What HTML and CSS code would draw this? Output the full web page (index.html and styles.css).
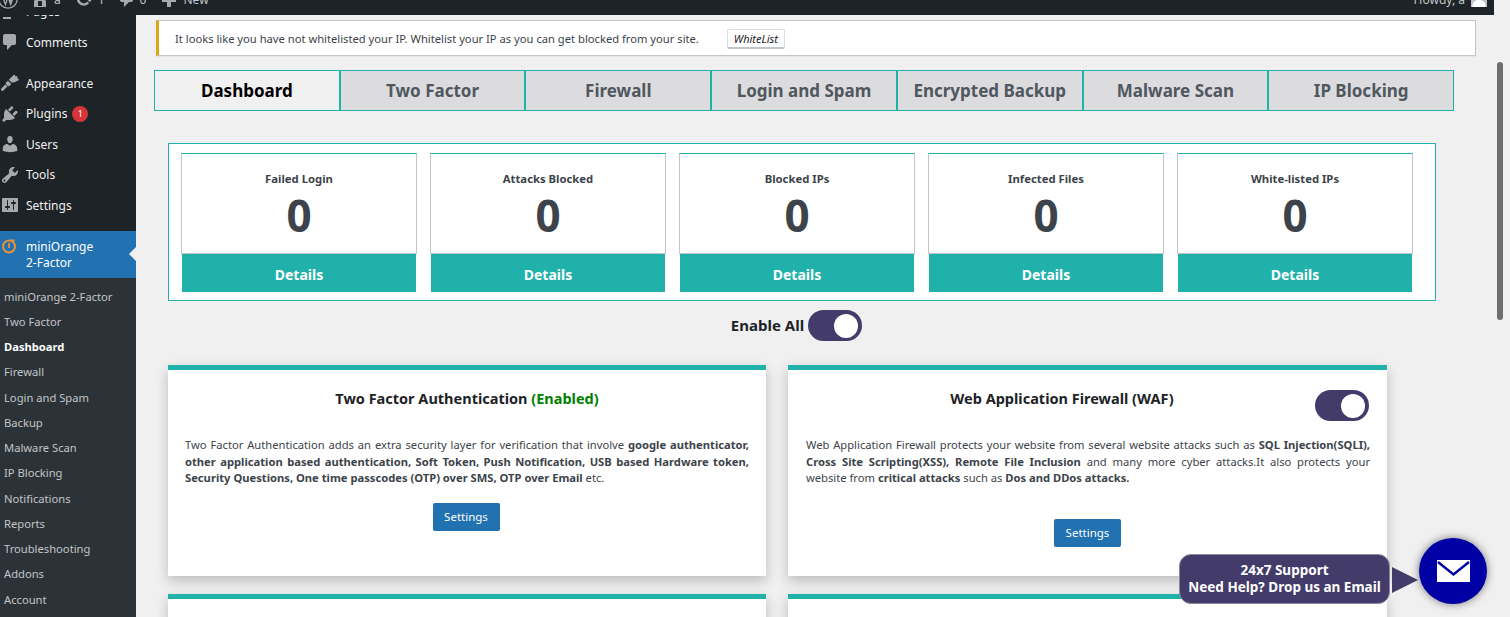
FILE: index.html
```html
<!doctype html>
<html lang="en">
<head>
  <meta charset="UTF-8" />
  <title>miniOrange 2-Factor - Dashboard</title>
  <link rel="stylesheet" href="styles.css">
</head>
<body>
  <div class="page">
    <div class="page-left">
      <div class="adminbar">
        <div class="adminbar-left">
          <span class="bar-item bar-logo"><svg viewBox="0 0 20 20" class="bar-icon"><circle cx="10" cy="10" r="9.2" fill="none" stroke="currentColor" stroke-width="1.3"/><path d="M3.5 6.5l4 11 2.5-7.5 2.7 7.5 3.3-9.5c.4-1.3.3-2.4-.2-3.4H8.5l1.2 2.5-2.3 6.5L5.6 6.5z" fill="currentColor"/></svg></span>
          <span class="bar-item bar-home"><svg viewBox="0 0 20 20" class="bar-icon"><path d="M16 8.5l1.53 1.53-1.06 1.06L10 4.62l-6.47 6.47-1.06-1.06L10 2.5l4 4v-2h2v4zm-6-2.46l6 5.99V18H4v-5.97zM12 17v-5H8v5h4z" fill="currentColor"/></svg>a</span>
          <span class="bar-item bar-updates"><svg viewBox="0 0 20 20" class="bar-icon"><path d="M10.2 3.28c3.53 0 6.43 2.61 6.92 6h2.08l-3.5 4-3.5-4h2.32c-.45-1.97-2.21-3.45-4.32-3.45-1.45 0-2.73.71-3.54 1.78L4.95 5.66C6.23 4.2 8.11 3.28 10.2 3.28zm-.4 13.44c-3.52 0-6.43-2.61-6.92-6H.8l3.5-4c1.17 1.33 2.33 2.67 3.5 4H5.48c.45 1.97 2.21 3.45 4.32 3.45 1.45 0 2.73-.71 3.54-1.78l1.71 1.95c-1.28 1.46-3.15 2.38-5.25 2.38z" fill="currentColor"/></svg>1</span>
          <span class="bar-item bar-comments"><svg viewBox="0 0 20 20" class="bar-icon"><path d="M5 2h9q.82 0 1.41.59T16 4v7q0 .82-.59 1.41T14 13h-2l-5 5v-5H5q-.82 0-1.41-.59T3 11V4q0-.82.59-1.41T5 2z" fill="currentColor"/></svg>0</span>
          <span class="bar-item bar-new"><svg viewBox="0 0 20 20" class="bar-icon"><path d="M17 10v3h-5v5H8v-5H3v-3h5V5h4v5h5z" fill="currentColor"/></svg>New</span>
        </div>
        <div class="adminbar-right">
          <span class="bar-item bar-howdy">Howdy, a</span>
          <span class="avatar"><svg viewBox="0 0 16 16"><path d="M8 1c2.2 0 3.2 2 3.2 4.200 0 1.600-.7 3-1.500 3.800 2.500.8 4.800 2.500 4.800 5.500V16h-13v-1.500c0-3 2.300-4.700 4.800-5.500-.8-.8-1.500-2.200-1.500-3.800C4.800 3 5.800 1 8 1z" fill="#fff"/></svg></span>
        </div>
      </div>

      <div class="wp-body">
        <nav class="sidebar">
          <ul class="menu menu-top">
            <li class="menu-clipped"><svg viewBox="0 0 20 20" class="menu-icon"><path d="M3 3h11v2H3zm0 4h14v2H3zm0 4h14v2H3zm0 4h8v2H3z" fill="currentColor"/></svg>Pages</li>
            <li class="menu-gap"><svg viewBox="0 0 20 20" class="menu-icon"><path d="M5 2h9q.82 0 1.41.59T16 4v7q0 .82-.59 1.41T14 13h-2l-5 5v-5H5q-.82 0-1.41-.59T3 11V4q0-.82.59-1.41T5 2z" fill="currentColor"/></svg>Comments</li>
            <li><svg viewBox="0 0 20 20" class="menu-icon"><path d="M11.500 9.500l-2.700-2.700 5-5 1.300.5.200 1.300 1.200-.5 1.200 1.200-.5 1.200 1.300.2.500 1.300-5 2.500zM7.900 7.700l3.400 3.400-1.800 1.800c-.5.500-1.300.5-1.800 0L6.100 11.300c-.5-.5-.5-1.300 0-1.800zM5.400 11.600l2 2-4 4c-.6.600-1.400.6-2 0s-.6-1.400 0-2z" fill="currentColor"/></svg>Appearance</li>
            <li><svg viewBox="0 0 20 20" class="menu-icon"><path d="M13.110 4.360L9.870 7.600 8 5.730l3.240-3.240c.35-.34 1.050-.2 1.560.32.52.51.66 1.210.31 1.550zm-8 1.770l.91-1.120 9.010 9.010-1.190.84c-.71.71-2.630 1.160-3.820 1.160H6.140L4.900 17.260c-.59.59-1.540.59-2.120 0-.59-.58-.59-1.530 0-2.120l1.240-1.240v-3.880c0-1.130.4-3.190 1.090-3.890zm7.260 3.970l3.240-3.240c.34-.35 1.040-.21 1.550.31.52.51.66 1.210.31 1.550l-3.240 3.250z" fill="currentColor"/></svg>Plugins<span class="badge">1</span></li>
            <li><svg viewBox="0 0 20 20" class="menu-icon"><path d="M10 9.250c-2.270 0-2.730-3.440-2.730-3.440C7 4.020 7.820 2 9.970 2c2.160 0 2.980 2.020 2.710 3.810 0 0-.41 3.440-2.680 3.440zm0 2.570L12.720 10c2.390 0 4.520 2.330 4.520 4.530v2.490s-3.650 1.130-7.240 1.130c-3.650 0-7.240-1.130-7.240-1.130v-2.490c0-2.250 1.940-4.480 4.470-4.480z" fill="currentColor"/></svg>Users</li>
            <li><svg viewBox="0 0 20 20" class="menu-icon"><path d="M16.680 9.770c-1.340 1.340-3.300 1.670-4.950.99l-5.410 6.520c-.99.99-2.590.99-3.580 0s-.99-2.590 0-3.570l6.520-5.420c-.68-1.650-.35-3.610.99-4.950 1.280-1.280 3.120-1.620 4.720-1.060l-2.890 2.890 2.820 2.820 2.860-2.870c.53 1.580.18 3.390-1.080 4.650zM3.810 16.210c.4.39 1.040.39 1.430 0 .4-.4.4-1.040 0-1.430-.39-.4-1.030-.4-1.430 0-.39.39-.39 1.030 0 1.430z" fill="currentColor"/></svg>Tools</li>
            <li><svg viewBox="0 0 20 20" class="menu-icon"><path d="M18 16V4c0-.55-.45-1-1-1H3c-.55 0-1 .45-1 1v12c0 .55.45 1 1 1h14c.55 0 1-.45 1-1zM8 11h1c.55 0 1 .45 1 1s-.45 1-1 1H8v1.500c0 .28-.22.5-.5.5s-.5-.22-.5-.5V13H6c-.55 0-1-.45-1-1s.45-1 1-1h1V5.500c0-.28.22-.5.5-.5s.5.22.5.5V11zm5-2h-1c-.55 0-1-.45-1-1s.45-1 1-1h1V5.500c0-.28.22-.5.5-.5s.5.22.5.5V7h1c.55 0 1 .45 1 1s-.45 1-1 1h-1v5.500c0 .28-.22.5-.5.5s-.5-.22-.5-.5V9z" fill="currentColor"/></svg>Settings</li>
          </ul>

          <div class="menu-current">
            <svg viewBox="0 0 20 20" class="menu-icon mo-icon"><circle cx="9" cy="10.500" r="6" fill="none" stroke="#e8913a" stroke-width="2"/><path d="M8.200 7h1.800v5H8.200zM10.500 3.500h4v2h-4z" fill="#e8913a"/></svg>
            <span>miniOrange<br>2-Factor</span>
          </div>

          <ul class="submenu">
            <li>miniOrange 2-Factor</li>
            <li>Two Factor</li>
            <li class="submenu-active">Dashboard</li>
            <li>Firewall</li>
            <li>Login and Spam</li>
            <li>Backup</li>
            <li>Malware Scan</li>
            <li>IP Blocking</li>
            <li>Notifications</li>
            <li>Reports</li>
            <li>Troubleshooting</li>
            <li>Addons</li>
            <li>Account</li>
          </ul>
        </nav>

        <main class="content">
          <div class="notice">
            <span class="notice-text">It looks like you have not whitelisted your IP. Whitelist your IP as you can get blocked from your site.</span>
            <button class="whitelist-btn">WhiteList</button>
          </div>

          <div class="tabs">
            <a class="tab tab-active">Dashboard</a>
            <a class="tab">Two Factor</a>
            <a class="tab">Firewall</a>
            <a class="tab">Login and Spam</a>
            <a class="tab">Encrypted Backup</a>
            <a class="tab">Malware Scan</a>
            <a class="tab">IP Blocking</a>
          </div>

          <div class="stats">
            <div class="stat">
              <div class="stat-top"><div class="stat-label">Failed Login</div><div class="stat-value">0</div></div>
              <div class="stat-link">Details</div>
            </div>
            <div class="stat">
              <div class="stat-top"><div class="stat-label">Attacks Blocked</div><div class="stat-value">0</div></div>
              <div class="stat-link">Details</div>
            </div>
            <div class="stat">
              <div class="stat-top"><div class="stat-label">Blocked IPs</div><div class="stat-value">0</div></div>
              <div class="stat-link">Details</div>
            </div>
            <div class="stat">
              <div class="stat-top"><div class="stat-label">Infected Files</div><div class="stat-value">0</div></div>
              <div class="stat-link">Details</div>
            </div>
            <div class="stat">
              <div class="stat-top"><div class="stat-label">White-listed IPs</div><div class="stat-value">0</div></div>
              <div class="stat-link">Details</div>
            </div>
          </div>

          <div class="enable-all">
            <span class="enable-label">Enable All</span>
            <span class="toggle"></span>
          </div>

          <div class="cards">
            <section class="card">
              <h3 class="card-title">Two Factor Authentication <span class="enabled">(Enabled)</span></h3>
              <p class="card-desc">Two Factor Authentication adds an extra security layer for verification that involve <b>google authenticator, other application based authentication, Soft Token, Push Notification, USB based Hardware token, Security Questions, One time passcodes (OTP) over SMS, OTP over Email</b> etc.</p>
              <div class="card-actions"><a class="settings-btn">Settings</a></div>
            </section>
            <section class="card card-right">
              <span class="toggle toggle-card"></span>
              <h3 class="card-title card-title-toggle">Web Application Firewall (WAF)</h3>
              <p class="card-desc">Web Application Firewall protects your website from several website attacks such as <b>SQL Injection(SQLI), Cross Site Scripting(XSS), Remote File Inclusion</b> and many more cyber attacks.It also protects your website from <b>critical attacks</b> such as <b>Dos and DDos attacks.</b></p>
              <div class="card-actions card-actions-low"><a class="settings-btn">Settings</a></div>
            </section>
            <section class="card"></section>
            <section class="card"></section>
          </div>
        </main>
      </div>
    </div>

    <div class="scrollbar"><div class="scrollbar-thumb"></div></div>
  </div>

  <div class="support">
    <div class="support-bubble">24x7 Support<br>Need Help? Drop us an Email</div>
    <span class="support-arrow"></span>
    <span class="support-circle">
      <svg viewBox="0 0 33 22" class="support-mail"><path d="M0 0h33v22H0z" fill="#fff"/><path d="M1 2l15.500 12.500L32 2" fill="none" stroke="#0000a5" stroke-width="2.500"/></svg>
    </span>
  </div>
</body>
</html>
```

FILE: styles.css
```css
:root {
  --teal: #20b2aa;
  --purple: #433c6a;
  --bar-bg: #1d2327;
  --grey-text: #3c434a;
  --page-bg: #f0f0f1;
}

html, body {
  margin: 0;
  padding: 0;
  height: 100%;
  overflow: hidden;
}

body {
  font-family: "Noto Sans", sans-serif;
  font-size: 13px;
  color: var(--grey-text);
  background-color: var(--page-bg);
}

.page {
  display: flex;
  height: 617px;
}

.page-left {
  width: 1494px;
  display: flex;
  flex-direction: column;
}

/* scrolled page: only the bottom of the admin bar shows */
.adminbar {
  height: 15px;
  flex: none;
  display: flex;
  justify-content: space-between;
  align-items: flex-end;
  overflow: hidden;
  background-color: var(--bar-bg);
  color: #c3c4c7;
}

.adminbar-left,
.adminbar-right {
  display: flex;
  align-items: center;
  height: 32px;
  flex: none;
}

.bar-item {
  display: flex;
  align-items: center;
  font-size: 12px;
  color: #c3c4c7;
}

.bar-icon {
  width: 20px;
  height: 20px;
  flex: none;
  color: #a7aaad;
  margin-right: 4px;
}

.bar-logo { margin-left: -2px; }
.bar-logo .bar-icon { margin-right: 12px; }
.bar-home { margin-right: 13px; }
.bar-updates { margin-right: 12px; }
.bar-comments { margin-right: 13px; }
.bar-comments .bar-icon { margin-right: 3px; }

.bar-howdy {
  margin-right: 6px;
}

.avatar {
  width: 16px;
  height: 16px;
  margin-right: 7px;
  background-color: #c3c4c7;
  overflow: hidden;
  display: block;
}

.avatar svg {
  display: block;
  width: 16px;
  height: 16px;
}

.wp-body {
  flex: 1;
  display: flex;
  min-height: 0;
}

.sidebar {
  width: 136px;
  flex: none;
  overflow: hidden;
  background-color: var(--bar-bg);
  color: #f0f0f1;
}

.menu {
  list-style: none;
  margin: -18.5px 0 0;
  padding: 0;
}

.menu li {
  height: 30.5px;
  display: flex;
  align-items: center;
  font-size: 12px;
  color: #f0f0f1;
}

.menu-gap {
  margin-bottom: 10.5px;
}

.menu-icon {
  width: 20px;
  height: 20px;
  flex: none;
  margin-right: 6px;
  color: #a7aaad;
}

.badge {
  width: 16px;
  height: 16px;
  margin-left: 5px;
  border-radius: 50%;
  background-color: #d63638;
  color: #fff;
  font-size: 9px;
  line-height: 16px;
  text-align: center;
}

.menu-current {
  position: relative;
  height: 47px;
  box-sizing: border-box;
  padding-top: 2px;
  margin-top: 10px;
  display: flex;
  align-items: center;
  background-color: #2271b1;
  color: #fff;
  font-size: 12px;
  line-height: 16px;
}

.menu-current .mo-icon {
  margin: -19px 6px 0 0;
}

.menu-current::after {
  content: "";
  position: absolute;
  right: 0;
  top: 16px;
  border: 7px solid transparent;
  border-right-color: var(--page-bg);
  border-left-width: 0;
}

.submenu {
  list-style: none;
  margin: 0;
  padding: 6px 0 7px;
  background-color: #2c3338;
}

.submenu li {
  height: 25.25px;
  line-height: 25.25px;
  padding-left: 4px;
  font-size: 11.2px;
  color: #c3c4c7;
  white-space: nowrap;
}

.submenu .submenu-active {
  color: #fff;
  font-weight: 700;
}

.content {
  flex: 1;
  min-width: 0;
  padding: 5px 0 0 18px;
}

.notice {
  width: 1320px;
  height: 36px;
  box-sizing: border-box;
  margin-left: 2px;
  display: flex;
  align-items: center;
  padding-left: 16px;
  background-color: #fff;
  border: 1px solid #c3c4c7;
  border-left: 3px solid #dba617;
  box-shadow: 0 1px 1px rgba(0, 0, 0, 0.04);
}

.notice-text {
  font-size: 11.2px;
  color: var(--grey-text);
}

.whitelist-btn {
  margin-left: 28px;
  width: 58px;
  height: 19px;
  padding: 0;
  font-family: inherit;
  font-size: 11px;
  font-style: italic;
  color: #1d2327;
  background-color: #fff;
  border: 1px solid #dcdcde;
  border-bottom-color: #c3c4c7;
  border-radius: 2px;
  box-shadow: 0 1px 0 #c3c4c7;
}

.tabs {
  width: 1300px;
  height: 41px;
  margin-top: 14px;
  display: flex;
}

.tab {
  flex: 1;
  box-sizing: border-box;
  display: flex;
  align-items: center;
  justify-content: center;
  border: 1px solid var(--teal);
  background-color: #dcdcde;
  color: #50575e;
  font-size: 17px;
  font-weight: 700;
}

.tab-active {
  background-color: var(--page-bg);
  color: #000;
}

.stats {
  width: 1268px;
  height: 158px;
  box-sizing: border-box;
  margin: 32px 0 0 14px;
  padding: 9px 22px 8px 12px;
  display: flex;
  gap: 13px;
  background-color: #fff;
  border: 1px solid var(--teal);
}

.stat {
  width: 236px;
  display: flex;
  flex-direction: column;
}

.stat-top {
  height: 101px;
  box-sizing: border-box;
  text-align: center;
  border: 1px solid #c3c4c7;
  border-top-color: var(--teal);
  padding-top: 16px;
}

.stat-label {
  font-size: 11.3px;
  font-weight: 700;
  line-height: 17px;
  color: var(--grey-text);
}

.stat-value {
  font-size: 44px;
  font-weight: 700;
  line-height: 56px;
  color: var(--grey-text);
}

.stat-link {
  flex: 1;
  margin: 0 1px;
  padding-top: 2px;
  display: flex;
  align-items: center;
  justify-content: center;
  background-color: var(--teal);
  color: #fff;
  font-size: 14px;
  font-weight: 700;
}

.enable-all {
  height: 31px;
  margin: 9px 0 0 14px;
  width: 1257px;
  display: flex;
  align-items: center;
  justify-content: center;
  gap: 4px;
  font-size: 15px;
  font-weight: 700;
  color: #1d2327;
}

.enable-label {
  margin-bottom: 2px;
}

.toggle {
  position: relative;
  display: block;
  width: 54px;
  height: 31px;
  border-radius: 16px;
  background-color: var(--purple);
}

.toggle::after {
  content: "";
  position: absolute;
  right: 4px;
  top: 3.5px;
  width: 24px;
  height: 24px;
  border-radius: 50%;
  background-color: #fff;
}

.toggle-card {
  position: absolute;
  right: 18px;
  top: 20px;
}

.cards {
  width: 1219px;
  margin: 24px 0 0 14px;
  display: grid;
  grid-template-columns: 598px 599px;
  column-gap: 22px;
  row-gap: 18px;
  grid-auto-rows: 211px;
}

.card {
  position: relative;
  box-sizing: border-box;
  padding: 0 17px;
  background-color: #fff;
  border-top: 5px solid var(--teal);
  box-shadow: 0 5px 12px rgba(0, 0, 0, 0.22);
}

.card-right {
  padding-left: 18px;
}

.card-title {
  margin: 0;
  padding-top: 18px;
  font-size: 14.5px;
  font-weight: 700;
  line-height: 20px;
  text-align: center;
  color: #1d2327;
}

.card-title-toggle {
  padding-right: 52px;
}

.enabled {
  color: green;
}

.card-desc {
  margin: 29px 0 0;
  font-size: 11.2px;
  line-height: 16.5px;
  text-align: justify;
  color: var(--grey-text);
}

.card-actions {
  margin-top: 16px;
  padding-right: 2px;
  text-align: center;
}

.card-actions-low {
  margin-top: 32px;
  padding-right: 1px;
}

.settings-btn {
  display: inline-block;
  width: 67px;
  height: 28px;
  line-height: 28px;
  border-radius: 2px;
  background-color: #2271b1;
  color: #fff;
  font-size: 11.5px;
  text-align: center;
}

.scrollbar {
  width: 16px;
  flex: none;
  background-color: var(--page-bg);
}

.scrollbar-thumb {
  width: 6px;
  height: 258px;
  margin: 62px 0 0 3px;
  border-radius: 3px;
  background-color: #6e6e6e;
}

/* floating help widget */
.support {
  position: fixed;
  left: 1179px;
  top: 538px;
  height: 66px;
  display: flex;
  align-items: center;
}

.support-bubble {
  width: 211px;
  height: 50px;
  box-sizing: border-box;
  margin-top: 15px;
  display: flex;
  align-items: center;
  justify-content: center;
  text-align: center;
  background-color: var(--purple);
  border: 1px solid #8a88a0;
  border-radius: 12px;
  color: #fff;
  font-size: 13.5px;
  font-weight: 700;
  line-height: 17px;
}

.support-arrow {
  margin: 17px 1px 0 2px;
  border-style: solid;
  border-width: 13px 0 13px 26px;
  border-color: transparent transparent transparent var(--purple);
}

.support-circle {
  width: 68px;
  height: 66px;
  border-radius: 50%;
  display: flex;
  align-items: center;
  justify-content: center;
  background-color: #0000a5;
  box-shadow: 0 0 8px rgba(0, 0, 0, 0.5);
}

.support-mail {
  width: 33px;
  height: 22px;
}
```
